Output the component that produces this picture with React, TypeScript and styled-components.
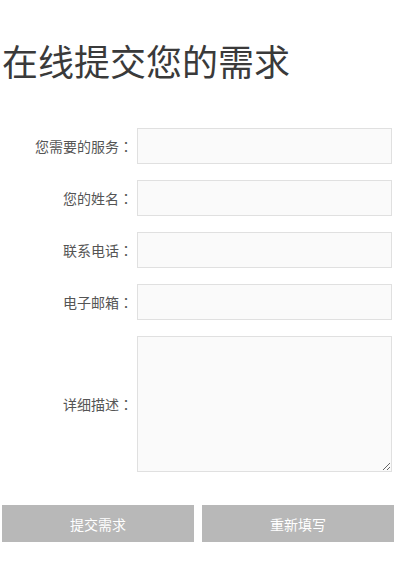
import styled, { createGlobalStyle } from "styled-components";

const GlobalStyle = createGlobalStyle`
  html, body {
    margin: 0;
    padding: 0;
    background: #ffffff;
  }
  body {
    font-family: "Noto Sans CJK SC", "Liberation Sans", sans-serif;
  }
`;

const fields = [
  { label: "您需要的服务", multi: false },
  { label: "您的姓名", multi: false },
  { label: "联系电话", multi: false },
  { label: "电子邮箱", multi: false },
  { label: "详细描述", multi: true },
];

const App = () => {
  return (
    <>
      <GlobalStyle />
      <Page>
        <Title>在线提交您的需求</Title>
        <Form>
          {fields.map((f) => (
            <Row key={f.label}>
              <Label>
                {f.label}
                <Colon>：</Colon>
              </Label>
              {f.multi ? <TextArea /> : <Input type="text" />}
            </Row>
          ))}
        </Form>
        <Buttons>
          <Button type="button">提交需求</Button>
          <Button type="button">重新填写</Button>
        </Buttons>
      </Page>
    </>
  );
};

const Page = styled.div`
  width: 392px;
  padding: 0 2px;
`;

const Title = styled.h1`
  margin: 0;
  padding-top: 37px;
  height: 46px;
  font-size: 36px;
  line-height: 46px;
  font-weight: normal;
  color: #3a3a3a;
  white-space: nowrap;
`;

const Form = styled.div`
  display: flex;
  flex-direction: column;
  gap: 16px;
  margin-top: 45px;
`;

const Row = styled.div`
  display: flex;
  align-items: center;
`;

const Label = styled.label`
  width: 131px;
  flex-shrink: 0;
  text-align: right;
  font-size: 14px;
  color: #555555;
  padding-right: 4px;
  white-space: nowrap;
`;

const Colon = styled.span`
  font-family: "Noto Sans CJK TC", "Noto Sans CJK SC", sans-serif;
`;

const fieldBase = `
  box-sizing: border-box;
  width: 255px;
  border: 1px solid #e0e0e0;
  background: #fafafa;
  margin: 0;
  padding: 4px 6px;
  font-family: inherit;
  font-size: 14px;
  outline: none;
`;

const Input = styled.input`
  ${fieldBase}
  height: 36px;
`;

const TextArea = styled.textarea`
  ${fieldBase}
  height: 136px;
  resize: vertical;
  display: block;
`;

const Buttons = styled.div`
  display: flex;
  gap: 8px;
  margin-top: 33px;
`;

const Button = styled.button`
  width: 192px;
  height: 37px;
  border: none;
  background: #b8b8b8;
  color: #ffffff;
  font-family: inherit;
  font-size: 14px;
  cursor: pointer;
  padding: 0;
`;

export default App;
